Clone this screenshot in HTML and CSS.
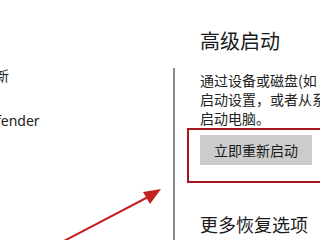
FILE: index.html
```html
<!DOCTYPE html>
<html lang="zh-CN">
<head>
<meta charset="utf-8">
<link rel="stylesheet" href="styles.css">
</head>
<body>
<div class="page">
  <div class="left">
    <div class="nav-item first">新</div>
    <div class="nav-item">fender</div>
  </div>
  <div class="right">
    <h2 class="title">高级启动</h2>
    <div class="section">
      <p class="desc">通过设备或磁盘(如<br>启动设置，或者从系<br>启动电脑。</p>
      <div class="highlight">
        <button class="btn">立即重新启动</button>
      </div>
      <h2 class="title2">更多恢复选项</h2>
    </div>
  </div>
  <svg class="arrow" width="320" height="240" viewBox="0 0 320 240">
    <line x1="64" y1="241" x2="150" y2="196" stroke="#c4201f" stroke-width="2" stroke-linecap="round"/>
    <polygon points="161,189 143,192 150,204" fill="#c4201f"/>
  </svg>
</div>
</body>
</html>
```
FILE: styles.css
```css
* { box-sizing: border-box; }
html, body {
  margin: 0;
  padding: 0;
  background: #fff;
}
body {
  font-family: "Noto Sans", "Noto Sans CJK SC", sans-serif;
  color: #1e1e1e;
}
.page {
  position: relative;
  display: flex;
  width: 320px;
  height: 240px;
  overflow: hidden;
}
.left {
  width: 173px;
  flex: none;
  padding-top: 66px;
}
.nav-item {
  font-size: 14px;
  line-height: 20px;
  margin-left: -4px;
  margin-bottom: 25px;
  color: #222;
}
.nav-item.first { margin-left: -5px; }
.right {
  flex: 1;
  display: flex;
  flex-direction: column;
}
.title {
  margin: 28px 0 0 27px;
  font-size: 20px;
  line-height: 26px;
  font-weight: 400;
  color: #1a1a1a;
  font-family: "Noto Sans CJK SC", sans-serif;
}
.section {
  flex: 1;
  margin-top: 14px;
  border-left: 2px solid #8a8a8a;
  padding: 3px 0 0 25px;
}
.desc {
  margin: 0;
  font-size: 14px;
  line-height: 19px;
  color: #222;
  white-space: nowrap;
  font-family: "Noto Sans CJK SC", sans-serif;
}
.highlight {
  margin: 0 -20px 0 -13px;
  border: 2px solid #a8161d;
  padding: 5px 0 16px 11px;
}
.btn {
  display: block;
  width: 112px;
  height: 30px;
  border: none;
  background: #cccccc;
  font-family: "Noto Sans CJK SC", sans-serif;
  font-size: 14px;
  color: #1a1a1a;
  padding: 0;
}
.title2 {
  margin: 29px 0 0 0;
  font-size: 18px;
  line-height: 24px;
  font-weight: 400;
  color: #1a1a1a;
  font-family: "Noto Sans CJK SC", sans-serif;
}
.arrow {
  position: absolute;
  left: 0;
  top: 0;
  pointer-events: none;
}
```
